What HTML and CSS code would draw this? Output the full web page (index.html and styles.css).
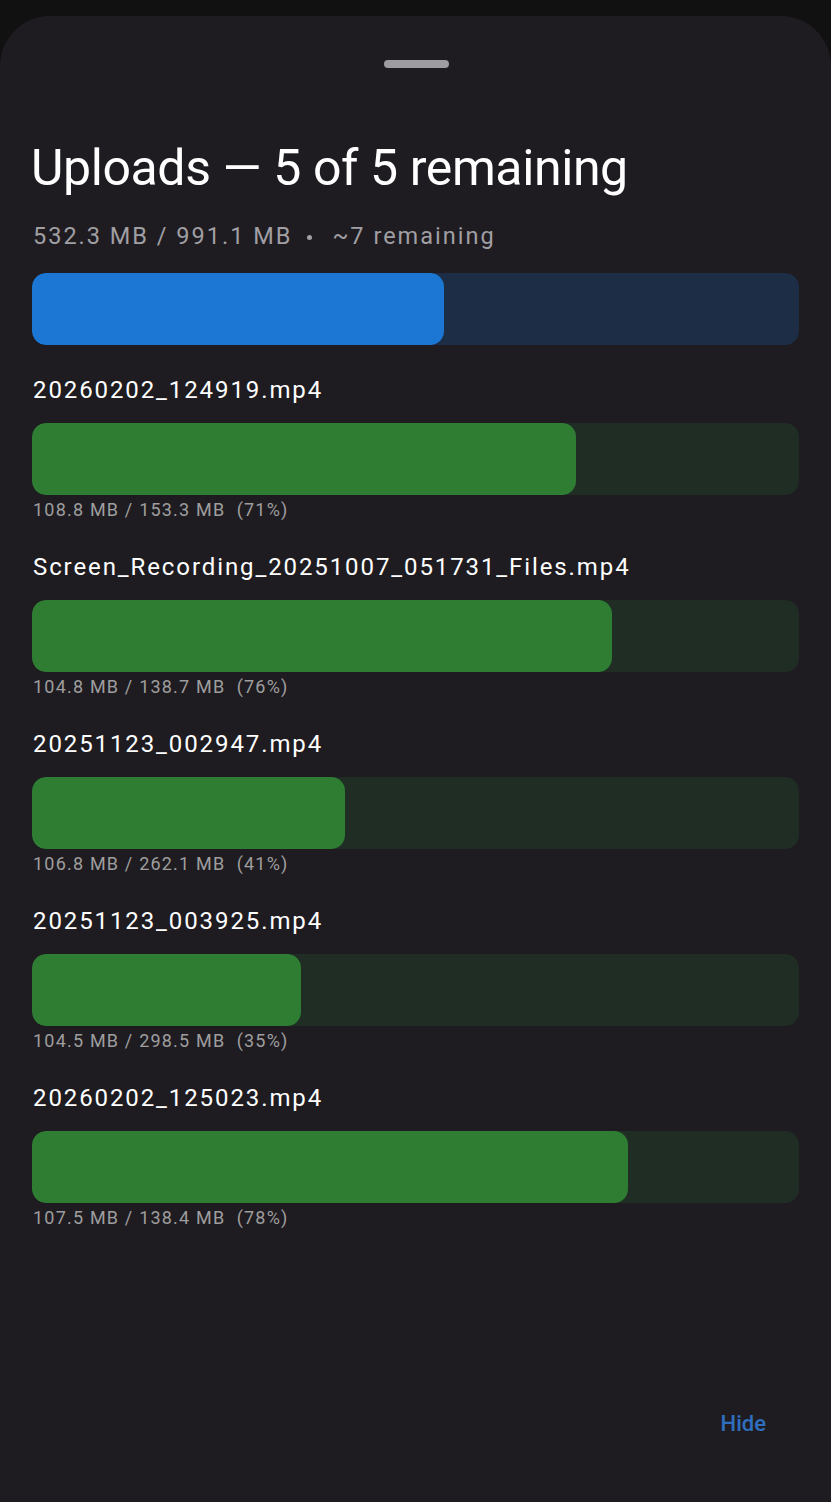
FILE: index.html
```html
<!DOCTYPE html>
<html>
<head>
<meta charset="utf-8">
<link rel="stylesheet" href="styles.css">
</head>
<body>
<div class="sheet">
  <div class="handle"></div>
  <h1 class="title">Uploads — 5 of 5 remaining</h1>
  <div class="summary">532.3 MB / 991.1 MB<span class="dot"></span>~7 remaining</div>
  <div class="bar bar-total"><div class="fill" style="width:53.71%"></div></div>
  <div class="files">
    <div class="file">
      <div class="name">20260202_124919.mp4</div>
      <div class="bar bar-file"><div class="fill" style="width:70.97%"></div></div>
      <div class="meta">108.8 MB / 153.3 MB&nbsp; (71%)</div>
    </div>
    <div class="file">
      <div class="name">Screen_Recording_20251007_051731_Files.mp4</div>
      <div class="bar bar-file"><div class="fill" style="width:75.56%"></div></div>
      <div class="meta">104.8 MB / 138.7 MB&nbsp; (76%)</div>
    </div>
    <div class="file">
      <div class="name">20251123_002947.mp4</div>
      <div class="bar bar-file"><div class="fill" style="width:40.75%"></div></div>
      <div class="meta">106.8 MB / 262.1 MB&nbsp; (41%)</div>
    </div>
    <div class="file">
      <div class="name">20251123_003925.mp4</div>
      <div class="bar bar-file"><div class="fill" style="width:35.01%"></div></div>
      <div class="meta">104.5 MB / 298.5 MB&nbsp; (35%)</div>
    </div>
    <div class="file">
      <div class="name">20260202_125023.mp4</div>
      <div class="bar bar-file"><div class="fill" style="width:77.67%"></div></div>
      <div class="meta">107.5 MB / 138.4 MB&nbsp; (78%)</div>
    </div>
  </div>
  <div class="actions"><button class="hide">Hide</button></div>
</div>
</body>
</html>
```

FILE: styles.css
```css
* { box-sizing: border-box; }
html, body {
  margin: 0;
  padding: 0;
  background: #111112;
  height: 1502px;
  overflow: hidden;
}
body {
  padding-top: 16px;
  font-family: Roboto, "Noto Sans", sans-serif;
}
.sheet {
  background: #1e1c21;
  border-radius: 50px 50px 0 0;
  height: 1486px;
  padding: 44px 32px 0 33px;
  display: flex;
  flex-direction: column;
}
.handle {
  width: 65px;
  height: 8px;
  border-radius: 4px;
  background: #9d9d9f;
  align-self: center;
}
.title {
  margin: 70px 0 0 -2px;
  font-size: 50px;
  font-weight: 400;
  line-height: 60px;
  color: #ffffff;
  letter-spacing: -0.4px;
}
.summary {
  margin-top: 23px;
  font-size: 23.5px;
  line-height: 30px;
  letter-spacing: 2px;
  color: #a09fa3;
  display: flex;
  align-items: center;
}
.dot {
  width: 5px;
  height: 5px;
  border-radius: 50%;
  background: #a09fa3;
  margin: 2px 20px 0 15px;
}
.bar {
  height: 72px;
  border-radius: 14px;
  overflow: hidden;
  margin-left: -1px;
}
.bar .fill {
  height: 100%;
  border-radius: 14px;
}
.bar-total {
  margin-top: 22px;
  background: #1d2d45;
}
.bar-total .fill { background: #1b77d3; }
.files {
  display: flex;
  flex-direction: column;
  gap: 30px;
  margin-top: 30px;
}
.name {
  font-size: 24px;
  line-height: 30px;
  letter-spacing: 1.9px;
  color: #ffffff;
  margin-bottom: 18px;
}
.bar-file { background: #1f2d24; }
.bar-file .fill { background: #2e7d33; }
.meta {
  font-size: 18px;
  line-height: 24px;
  letter-spacing: 1.2px;
  color: #9e9e9e;
  margin-top: 3px;
}
.actions {
  margin-top: auto;
  margin-bottom: 63px;
  display: flex;
  justify-content: flex-end;
}
.hide {
  background: none;
  border: none;
  font-family: Roboto, sans-serif;
  font-size: 22px;
  font-weight: 500;
  color: #2f6fbf;
  padding: 0 33px 0 0;
  line-height: 30px;
}
```
